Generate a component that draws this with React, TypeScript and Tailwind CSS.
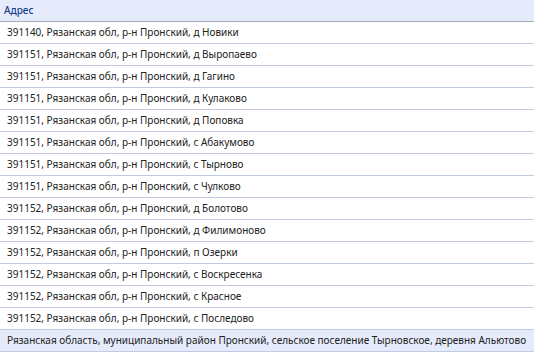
const rows = [
	'391140, Рязанская обл, р-н Пронский, д Новики',
	'391151, Рязанская обл, р-н Пронский, д Выропаево',
	'391151, Рязанская обл, р-н Пронский, д Гагино',
	'391151, Рязанская обл, р-н Пронский, д Кулаково',
	'391151, Рязанская обл, р-н Пронский, д Поповка',
	'391151, Рязанская обл, р-н Пронский, с Абакумово',
	'391151, Рязанская обл, р-н Пронский, с Тырново',
	'391151, Рязанская обл, р-н Пронский, с Чулково',
	'391152, Рязанская обл, р-н Пронский, д Болотово',
	'391152, Рязанская обл, р-н Пронский, д Филимоново',
	'391152, Рязанская обл, р-н Пронский, п Озерки',
	'391152, Рязанская обл, р-н Пронский, с Воскресенка',
	'391152, Рязанская обл, р-н Пронский, с Красное',
	'391152, Рязанская обл, р-н Пронский, с Последово'
]

const selected =
	'Рязанская область, муниципальный район Пронский, сельское поселение Тырновское, деревня Альютово'

export default function App() {
	return (
		<div className="w-[534px] h-[354px] bg-white font-['Noto_Sans',sans-serif] text-[10px] whitespace-nowrap">
			<div className="flex h-[22px] items-center border-b border-[#a6abb8] bg-[#e6ebfb] px-[4px] font-medium text-[#15428b]">
				Адрес
			</div>
			{rows.map(text => (
				<div
					key={text}
					className="flex h-[22px] items-center border-b border-[#c1cbe3] px-[7px] text-[#222]"
				>
					{text}
				</div>
			))}
			<div className="flex h-[22px] items-center border-b border-[#c1cbe3] bg-[#e6ebfb] px-[7px] text-[#222]">
				{selected}
			</div>
		</div>
	)
}
